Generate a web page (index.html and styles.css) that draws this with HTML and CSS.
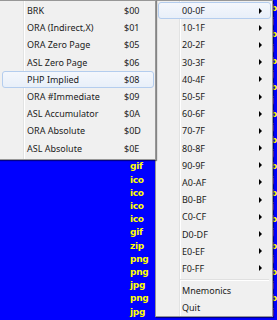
FILE: index.html
```html
<!DOCTYPE html>
<html>
<head>
<meta charset="utf-8">
<link rel="stylesheet" href="styles.css">
</head>
<body>
<div class="desk">
  <div class="files">
    <div class="col ext">
      <span>gif</span><span>ico</span><span>ico</span><span>ico</span><span>ico</span><span>gif</span><span>zip</span><span>png</span><span>png</span><span>jpg</span><span>png</span><span>jpg</span>
    </div>
    <div class="col cut">
      <span>b</span><span>j</span><span>b</span><span>j</span><span>b</span><span>j</span><span>b</span><span>j</span><span>b</span><span>j</span><span>b</span><span>j</span><span>b</span><span>j</span><span>b</span><span>j</span><span>b</span><span>j</span><span>b</span><span>j</span><span>b</span><span>j</span><span>b</span><span>j</span>
    </div>
  </div>

  <div class="menu sub">
    <div class="item"><span class="lbl">BRK</span><span class="key">$00</span></div>
    <div class="item"><span class="lbl">ORA (Indirect,X)</span><span class="key">$01</span></div>
    <div class="item"><span class="lbl">ORA Zero Page</span><span class="key">$05</span></div>
    <div class="item"><span class="lbl">ASL Zero Page</span><span class="key">$06</span></div>
    <div class="item hot"><span class="lbl">PHP Implied</span><span class="key">$08</span></div>
    <div class="item"><span class="lbl">ORA #Immediate</span><span class="key">$09</span></div>
    <div class="item"><span class="lbl">ASL Accumulator</span><span class="key">$0A</span></div>
    <div class="item"><span class="lbl">ORA Absolute</span><span class="key">$0D</span></div>
    <div class="item"><span class="lbl">ASL Absolute</span><span class="key">$0E</span></div>
  </div>

  <div class="menu main">
    <div class="item hot"><span class="lbl">00-0F</span><span class="arr"></span></div>
    <div class="item"><span class="lbl">10-1F</span><span class="arr"></span></div>
    <div class="item"><span class="lbl">20-2F</span><span class="arr"></span></div>
    <div class="item"><span class="lbl">30-3F</span><span class="arr"></span></div>
    <div class="item"><span class="lbl">40-4F</span><span class="arr"></span></div>
    <div class="item"><span class="lbl">50-5F</span><span class="arr"></span></div>
    <div class="item"><span class="lbl">60-6F</span><span class="arr"></span></div>
    <div class="item"><span class="lbl">70-7F</span><span class="arr"></span></div>
    <div class="item"><span class="lbl">80-8F</span><span class="arr"></span></div>
    <div class="item"><span class="lbl">90-9F</span><span class="arr"></span></div>
    <div class="item"><span class="lbl">A0-AF</span><span class="arr"></span></div>
    <div class="item"><span class="lbl">B0-BF</span><span class="arr"></span></div>
    <div class="item"><span class="lbl">C0-CF</span><span class="arr"></span></div>
    <div class="item"><span class="lbl">D0-DF</span><span class="arr"></span></div>
    <div class="item"><span class="lbl">E0-EF</span><span class="arr"></span></div>
    <div class="item"><span class="lbl">F0-FF</span><span class="arr"></span></div>
    <div class="sep"></div>
    <div class="item"><span class="lbl">Mnemonics</span></div>
    <div class="item"><span class="lbl">Quit</span></div>
  </div>
</div>
</body>
</html>
```
FILE: styles.css
```css
html, body {
  margin: 0;
  padding: 0;
}
body {
  width: 277px;
  height: 320px;
  overflow: hidden;
  background: #0000ff;
}
.desk {
  position: relative;
  width: 277px;
  height: 320px;
  overflow: hidden;
}
.files {
  display: flex;
  padding-left: 130px;
}
.col {
  display: flex;
  flex-direction: column;
  font-family: "DejaVu Sans", sans-serif;
  font-weight: bold;
  font-size: 9px;
  letter-spacing: -0.3px;
  line-height: 13.2px;
  color: #ffff00;
}
.ext {
  width: 144px;
  padding-top: 160.4px;
}
.cut {
  padding-top: 2px;
}
.menu {
  position: absolute;
  top: 0;
  box-sizing: border-box;
  border: 1px solid #979797;
  background:
    linear-gradient(to right, transparent 23px, #e2e3e3 23px, #e2e3e3 24px, #ffffff 24px, #ffffff 25px, transparent 25px),
    #f0f0f0;
  box-shadow: 1px 1px 1px rgba(0, 0, 0, 0.45);
  font-family: "Noto Sans", sans-serif;
  font-size: 9px;
  color: #1b1b1b;
  padding: 1px 1px 1px 1px;
}
.sub {
  left: -1px;
  width: 157px;
  z-index: 2;
  padding-bottom: 2px;
}
.main {
  left: 155px;
  width: 118px;
  z-index: 1;
  padding-bottom: 0;
}
.item {
  box-sizing: border-box;
  height: 17.2px;
  display: flex;
  align-items: center;
  border: 1px solid transparent;
  border-radius: 3px;
  margin-left: 1px;
}
.sub .item {
  padding-left: 24px;
}
.main .item {
  padding-left: 23px;
}
.item.hot {
  border-color: #b4cdee;
  background: linear-gradient(#f4f7fc, #e8eff9);
}
.sub .lbl {
  width: 97px;
}
.main .lbl {
  flex: 1;
}
.arr {
  width: 0;
  height: 0;
  border-left: 3px solid #000;
  border-top: 3px solid transparent;
  border-bottom: 3px solid transparent;
  margin-right: 8px;
}
.sep {
  height: 4.8px;
  margin-left: 23px;
  margin-right: 2px;
  background: linear-gradient(to bottom, transparent 2px, #e0e0e0 2px, #e0e0e0 3px, #ffffff 3px, #ffffff 4px, transparent 4px);
}
```
